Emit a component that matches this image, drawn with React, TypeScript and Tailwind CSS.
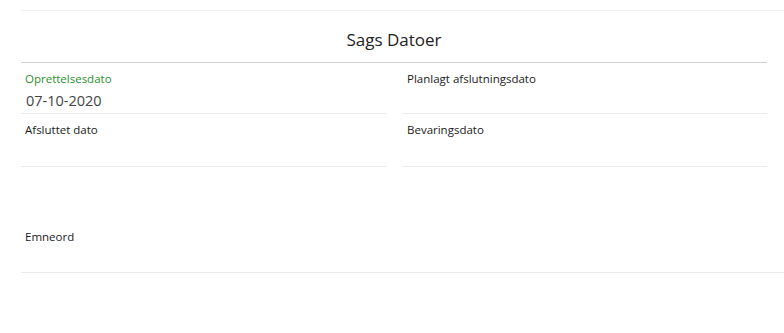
const font = { fontFamily: '"Open Sans", "Noto Sans", sans-serif' };

function Field({ label, value, active, h }: { label: string; value?: string; active?: boolean; h: string }) {
  return (
    <div className={`${h} border-b border-[#ebebeb] px-1 pt-[7px]`}>
      <div className={`text-[11.5px] leading-[18px] ${active ? "text-[#2c8f2c]" : "text-[#1a1a1a]"}`}>{label}</div>
      {value && <div className="text-[14.5px] leading-[20px] mt-[3px] ml-[1px] text-[#444]">{value}</div>}
    </div>
  );
}

export default function App() {
  return (
    <div className="w-[784px] h-[333px] bg-white pl-[21px] pt-[10px]" style={font}>
      <div className="border-t border-[#efefef]" />
      <div className="mr-[17px] h-[52px] border-b border-[#cfcfcf] flex items-center justify-center pt-[5px]">
        <h2 className="text-[17px] text-[#222] leading-none">Sags Datoer</h2>
      </div>
      <div className="grid grid-cols-[365px_364px] gap-x-[17px] mr-[17px]">
        <Field h="h-[51px]" label="Oprettelsesdato" value="07-10-2020" active />
        <Field h="h-[51px]" label="Planlagt afslutningsdato" />
        <Field h="h-[53px]" label="Afsluttet dato" />
        <Field h="h-[53px]" label="Bevaringsdato" />
      </div>
      <div className="mt-[52px] h-[54px] border-b border-[#ebebeb] px-1 pt-[9px]">
        <div className="text-[11.5px] leading-[18px] text-[#1a1a1a]">Emneord</div>
      </div>
    </div>
  );
}
